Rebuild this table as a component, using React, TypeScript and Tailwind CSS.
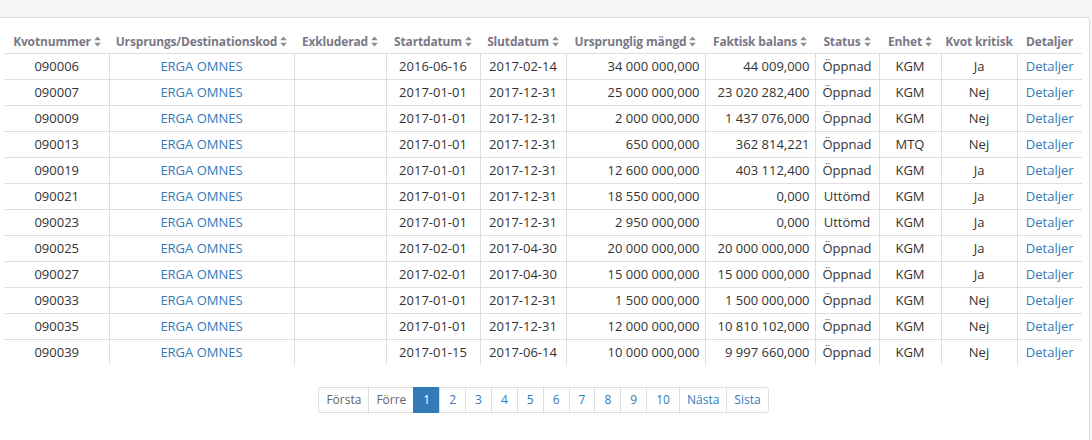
type Row = {
  nr: string;
  start: string;
  slut: string;
  mangd: string;
  balans: string;
  status: string;
  enhet: string;
  kritisk: string;
};

const rows: Row[] = [
  { nr: '090006', start: '2016-06-16', slut: '2017-02-14', mangd: '34 000 000,000', balans: '44 009,000', status: 'Öppnad', enhet: 'KGM', kritisk: 'Ja' },
  { nr: '090007', start: '2017-01-01', slut: '2017-12-31', mangd: '25 000 000,000', balans: '23 020 282,400', status: 'Öppnad', enhet: 'KGM', kritisk: 'Nej' },
  { nr: '090009', start: '2017-01-01', slut: '2017-12-31', mangd: '2 000 000,000', balans: '1 437 076,000', status: 'Öppnad', enhet: 'KGM', kritisk: 'Nej' },
  { nr: '090013', start: '2017-01-01', slut: '2017-12-31', mangd: '650 000,000', balans: '362 814,221', status: 'Öppnad', enhet: 'MTQ', kritisk: 'Nej' },
  { nr: '090019', start: '2017-01-01', slut: '2017-12-31', mangd: '12 600 000,000', balans: '403 112,400', status: 'Öppnad', enhet: 'KGM', kritisk: 'Ja' },
  { nr: '090021', start: '2017-01-01', slut: '2017-12-31', mangd: '18 550 000,000', balans: '0,000', status: 'Uttömd', enhet: 'KGM', kritisk: 'Ja' },
  { nr: '090023', start: '2017-01-01', slut: '2017-12-31', mangd: '2 950 000,000', balans: '0,000', status: 'Uttömd', enhet: 'KGM', kritisk: 'Ja' },
  { nr: '090025', start: '2017-02-01', slut: '2017-04-30', mangd: '20 000 000,000', balans: '20 000 000,000', status: 'Öppnad', enhet: 'KGM', kritisk: 'Ja' },
  { nr: '090027', start: '2017-02-01', slut: '2017-04-30', mangd: '15 000 000,000', balans: '15 000 000,000', status: 'Öppnad', enhet: 'KGM', kritisk: 'Ja' },
  { nr: '090033', start: '2017-01-01', slut: '2017-12-31', mangd: '1 500 000,000', balans: '1 500 000,000', status: 'Öppnad', enhet: 'KGM', kritisk: 'Nej' },
  { nr: '090035', start: '2017-01-01', slut: '2017-12-31', mangd: '12 000 000,000', balans: '10 810 102,000', status: 'Öppnad', enhet: 'KGM', kritisk: 'Nej' },
  { nr: '090039', start: '2017-01-15', slut: '2017-06-14', mangd: '10 000 000,000', balans: '9 997 660,000', status: 'Öppnad', enhet: 'KGM', kritisk: 'Nej' },
];

const widths = [104, 185, 92, 94, 86, 139, 110, 64, 62, 76, 65];

function SortIcon() {
  return (
    <svg width="7" height="11" viewBox="0 0 7 11" className="ml-[3px] inline-block align-[-1px]">
      <path d="M3.5 0.5 L6.8 4.3 L0.2 4.3 Z" fill="#8a8a96" />
      <path d="M3.5 10.5 L6.8 6.7 L0.2 6.7 Z" fill="#8a8a96" />
    </svg>
  );
}

function Th({ label, sort = true }: { label: string; sort?: boolean }) {
  return (
    <th className="h-[35px] border-b border-[#ddd] px-[4px] pb-[3px] text-center align-bottom text-[12px] leading-[17px] font-bold tracking-[-0.16px] whitespace-nowrap text-[#7a7886]">
      {label}
      {sort && <SortIcon />}
    </th>
  );
}

const td = 'h-[26px] border border-[#ddd] px-[5px] py-0 text-[13px] leading-[18px] whitespace-nowrap';

function Pagination() {
  const items = ['Första', 'Förre', '1', '2', '3', '4', '5', '6', '7', '8', '9', '10', 'Nästa', 'Sista'];
  return (
    <div className="mt-[22px] flex justify-center">
      <ul className="flex text-[12px] leading-[24px]">
        {items.map((it, i) => {
          const active = it === '1';
          const muted = i < 2;
          const isNum = /^\d+$/.test(it);
          return (
            <li
              key={it}
              className={
                'h-[26px] border-y border-l ' +
                (isNum ? 'px-[9px] ' : 'px-[7px] ') +
                (i === 0 ? 'rounded-l-[3px] ' : '') +
                (i === items.length - 1 ? 'rounded-r-[3px] border-r ' : '') +
                (active
                  ? 'border-[#337ab7] bg-[#337ab7] text-white'
                  : muted
                    ? 'border-[#ddd] bg-white text-[#666]'
                    : 'border-[#ddd] bg-white text-[#337ab7]')
              }
            >
              {it}
            </li>
          );
        })}
      </ul>
    </div>
  );
}

export default function App() {
  return (
    <div className="h-[440px] w-[1092px] overflow-hidden bg-[#f5f5f5] pt-[17px] pr-[2px] font-['Open_Sans',sans-serif] text-[#333]">
      <div className="h-full rounded-tr-[4px] border-t border-r border-[#ddd] bg-white pl-[5px] pr-[7px]">
        <table className="w-[1077px] table-fixed border-collapse border-hidden">
          <colgroup>
            {widths.map((w, i) => (
              <col key={i} style={{ width: w }} />
            ))}
          </colgroup>
          <thead>
            <tr>
              <Th label="Kvotnummer" />
              <Th label="Ursprungs/Destinationskod" />
              <Th label="Exkluderad" />
              <Th label="Startdatum" />
              <Th label="Slutdatum" />
              <Th label="Ursprunglig mängd" />
              <Th label="Faktisk balans" />
              <Th label="Status" />
              <Th label="Enhet" />
              <Th label="Kvot kritisk" sort={false} />
              <Th label="Detaljer" sort={false} />
            </tr>
          </thead>
          <tbody>
            {rows.map((r) => (
              <tr key={r.nr}>
                <td className={td + ' text-center'}>{r.nr}</td>
                <td className={td + ' text-center'}>
                  <a href="#" className="text-[#337ab7]">ERGA OMNES</a>
                </td>
                <td className={td}></td>
                <td className={td + ' text-center'}>{r.start}</td>
                <td className={td + ' text-center'}>{r.slut}</td>
                <td className={td + ' text-right'}>{r.mangd}</td>
                <td className={td + ' text-right'}>{r.balans}</td>
                <td className={td + ' text-center'}>{r.status}</td>
                <td className={td + ' text-center'}>{r.enhet}</td>
                <td className={td + ' text-center'}>{r.kritisk}</td>
                <td className={td + ' text-center'}>
                  <a href="#" className="text-[#337ab7]">Detaljer</a>
                </td>
              </tr>
            ))}
          </tbody>
        </table>
        <Pagination />
      </div>
    </div>
  );
}
